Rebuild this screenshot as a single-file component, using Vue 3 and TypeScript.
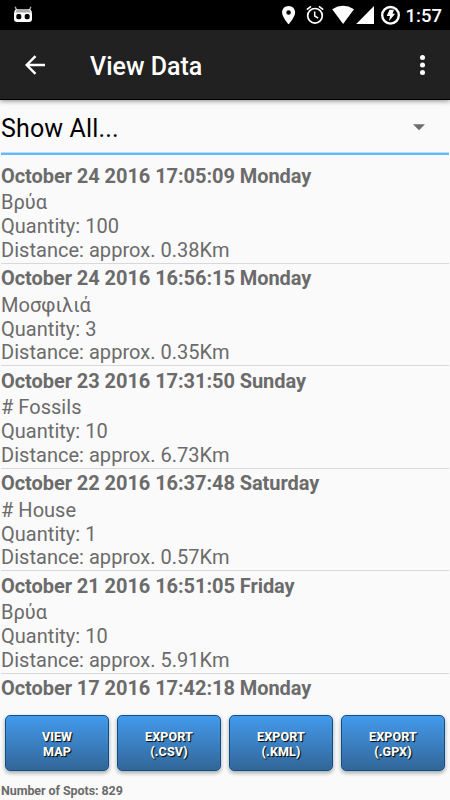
<script setup lang="ts">
interface Spot {
  date: string
  name?: string
  quantity?: number
  distance?: string
}

const spots: Spot[] = [
  { date: 'October 24 2016 17:05:09 Monday', name: 'Βρύα', quantity: 100, distance: '0.38Km' },
  { date: 'October 24 2016 16:56:15 Monday', name: 'Μοσφιλιά', quantity: 3, distance: '0.35Km' },
  { date: 'October 23 2016 17:31:50 Sunday', name: '# Fossils', quantity: 10, distance: '6.73Km' },
  { date: 'October 22 2016 16:37:48 Saturday', name: '# House', quantity: 1, distance: '0.57Km' },
  { date: 'October 21 2016 16:51:05 Friday', name: 'Βρύα', quantity: 10, distance: '5.91Km' },
  { date: 'October 17 2016 17:42:18 Monday' },
]

const actions: [string, string][] = [
  ['VIEW', 'MAP'],
  ['EXPORT', '(.CSV)'],
  ['EXPORT', '(.KML)'],
  ['EXPORT', '(.GPX)'],
]
</script>

<template>
  <div class="screen">
    <div class="status">
      <svg class="robot" width="20" height="18" viewBox="0 0 20 18">
        <path d="M2.200 .8 3.800 5M17.800 .8 16.200 5" stroke="#aaa" stroke-width="1.400" />
        <path d="M1 8Q1 3 5 3H15Q19 3 19 8V13Q19 16 16 16H4Q1 16 1 13Z" fill="#fff" />
        <path d="M2.500 6.500Q3 3 6 3H14Q17 3 17.500 6.500Z" fill="#aaa" />
        <rect x="3.300" y="8" width="5" height="5.200" rx="1.700" />
        <rect x="11.700" y="8" width="5" height="5.200" rx="1.700" />
      </svg>
      <svg class="tray" width="120" height="24" viewBox="280 3 120 24">
        <path fill="#fff" fill-rule="evenodd" d="M288.600 6c-3.700 0-6.500 2.800-6.500 6.400 0 4.800 6.500 11.800 6.500 11.800s6.500-7 6.500-11.800c0-3.600-2.800-6.400-6.500-6.400zm0 4.200a2.300 2.300 0 1 1 0 4.600 2.300 2.300 0 0 1 0-4.600z" />
        <g fill="none" stroke="#fff">
          <circle cx="315" cy="15.800" r="7.300" stroke-width="1.700" />
          <path d="M314.700 11.400V16l3.500 2.200" stroke-width="1.500" />
          <path d="M306.800 9.700 311 6.300M323.200 9.700 319 6.300" stroke-width="1.700" />
        </g>
        <path fill="#fff" d="M332.200 9.200Q343 2.400 354 9.200L343.100 24ZM356.200 24H374V6Z" />
        <circle cx="390.500" cy="15.300" r="8.300" fill="none" stroke="#fff" stroke-width="2.400" />
        <path fill="#fff" d="M389.500 9.700h4.500l-1.500 4h2.700l-6.200 7.300 1-5h-3.300z" />
      </svg>
      <span class="clock">1:57</span>
    </div>

    <header class="bar">
      <svg class="back" width="22" height="20" viewBox="0 0 22 20">
        <path d="M21 10H3.300M11.500 1.200 2.700 10l8.800 8.800" fill="none" stroke="#fff" stroke-width="2.400" />
      </svg>
      <h1>View Data</h1>
      <svg class="more" width="7" height="22" viewBox="0 0 7 22" fill="#fff">
        <circle cx="4.500" cy="3.500" r="2.500" /><circle cx="4.500" cy="11" r="2.500" /><circle cx="4.500" cy="18.500" r="2.500" />
      </svg>
    </header>

    <div class="spinner">
      <span>Show All...</span>
      <svg width="12" height="7" viewBox="0 0 12 7"><path d="M0 .2H12L6 6.300Z" fill="#6d6d6d" /></svg>
    </div>

    <main class="list">
      <article v-for="spot in spots" :key="spot.date" class="item">
        <h2>{{ spot.date }}</h2>
        <template v-if="spot.name">
          <p>{{ spot.name }}</p>
          <p>Quantity: {{ spot.quantity }}</p>
          <p>Distance: approx. {{ spot.distance }}</p>
        </template>
      </article>
    </main>

    <div class="actions">
      <button v-for="[top, bottom] in actions" :key="bottom" type="button">
        <span>{{ top }}</span><span>{{ bottom }}</span>
      </button>
    </div>
    <footer>Number of Spots: 829</footer>
  </div>
</template>

<style>
body {
  background: #fafafa;
}
</style>

<style scoped>
.screen {
  width: 450px;
  height: 800px;
  overflow: hidden;
  display: flex;
  flex-direction: column;
  background: #fafafa;
  color: #6b6b6b;
  font-family: Roboto, "Noto Sans", sans-serif;
}
svg {
  display: block;
  flex: none;
}
.status {
  flex: none;
  height: 30px;
  box-sizing: border-box;
  padding: 0 11px 0 12.500px;
  display: flex;
  align-items: center;
  background: #000;
}
.tray {
  margin-left: auto;
}
.clock {
  margin-left: 5.500px;
  width: 33.500px;
  color: #fff;
  font-size: 18.500px;
  font-weight: 500;
  line-height: 30px;
  padding-top: 2px;
  white-space: nowrap;
}
.bar {
  flex: none;
  height: 70px;
  box-sizing: border-box;
  padding: 0 25px 0 24px;
  display: flex;
  align-items: center;
  background: #212121;
  border-bottom: 1px solid #000;
  box-shadow: 0 1px 5px rgba(0, 0, 0, 0.45);
}
h1 {
  margin: 5px 0 0 44px;
  color: #fff;
  font-size: 25px;
  line-height: 30px;
  font-weight: 500;
}
.more {
  margin-left: auto;
}
.spinner {
  flex: none;
  height: 55px;
  box-sizing: border-box;
  margin: 0 1px;
  padding: 2px 24px 0 0;
  display: flex;
  align-items: center;
  justify-content: space-between;
  border-bottom: 2px solid #64b9fa;
  box-shadow: inset 0 -1px #b5dcfa;
  color: #000;
  font-size: 25px;
  letter-spacing: 0.15px;
}
.spinner span {
  padding-top: 2px;
}
.list {
  flex: none;
  height: 548px;
  margin: 0 1px;
  padding-top: 6px;
  overflow: hidden;
}
.item {
  height: 102.500px;
  box-sizing: border-box;
  padding-top: 2.900px;
  border-bottom: 1px solid #d8d8d8;
}
h2 {
  margin: 0 0 3.500px;
  font-size: 20px;
  line-height: 24px;
  font-weight: 700;
  letter-spacing: -0.06px;
}
p {
  margin: 0;
  font-size: 20px;
  line-height: 23.750px;
  letter-spacing: 0.03px;
}
.actions {
  flex: none;
  margin-top: 6px;
  padding: 0 5px;
  display: grid;
  grid-template-columns: repeat(4, 1fr);
  gap: 8px;
}
button {
  height: 56px;
  padding: 2px 0 0;
  display: flex;
  flex-direction: column;
  align-items: center;
  justify-content: center;
  border: 1px solid #0b5289;
  border-radius: 5px;
  background: linear-gradient(#439aec, #326698);
  box-shadow: 0 2px 4px rgba(0, 0, 0, 0.35);
  color: #fff;
  font-family: inherit;
  font-size: 12.500px;
  line-height: 15px;
  font-weight: 800;
  letter-spacing: 0.1px;
  text-shadow: 1px 1px 1px #000;
}
footer {
  margin: 12px 0 0 1px;
  font-size: 12.500px;
  line-height: 16px;
  font-weight: 700;
  letter-spacing: -0.08px;
}
</style>
